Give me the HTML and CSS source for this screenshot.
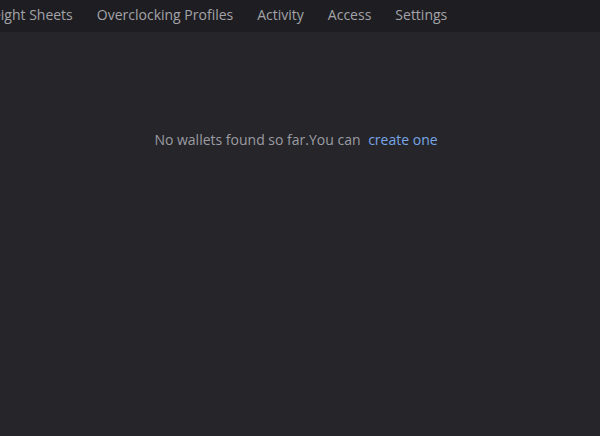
FILE: index.html
```html
<!DOCTYPE html>
<html>
<head>
<meta charset="utf-8">
<link rel="stylesheet" href="styles.css">
</head>
<body>
<header class="topbar">
  <nav class="nav">
    <a class="nav-item first">Weight Sheets</a>
    <a class="nav-item">Overclocking Profiles</a>
    <a class="nav-item">Activity</a>
    <a class="nav-item">Access</a>
    <a class="nav-item">Settings</a>
  </nav>
</header>
<main class="content">
  <p class="empty">No wallets found so far.You can <a class="link">create one</a></p>
</main>
</body>
</html>
```
FILE: styles.css
```css
html, body {
  margin: 0;
  padding: 0;
  height: 100%;
}
body {
  background: #25252a;
  font-family: "Open Sans", "Liberation Sans", sans-serif;
  overflow: hidden;
}
.topbar {
  height: 32px;
  background: #1e1e22;
  overflow: hidden;
}
.nav {
  display: flex;
  gap: 24px;
  align-items: flex-start;
  padding-top: 5px;
  margin-left: -20px;
  white-space: nowrap;
}
.nav-item {
  color: #a3a3a8;
  font-size: 14px;
  line-height: 20px;
  text-decoration: none;
}
.content {
  padding-top: 96px;
  display: flex;
  justify-content: center;
  padding-right: 8px;
}
.empty {
  margin: 0;
  color: #9c9ca2;
  font-size: 14px;
  line-height: 24px;
}
.link {
  color: #79a6e6;
  margin-left: 4px;
}
```
